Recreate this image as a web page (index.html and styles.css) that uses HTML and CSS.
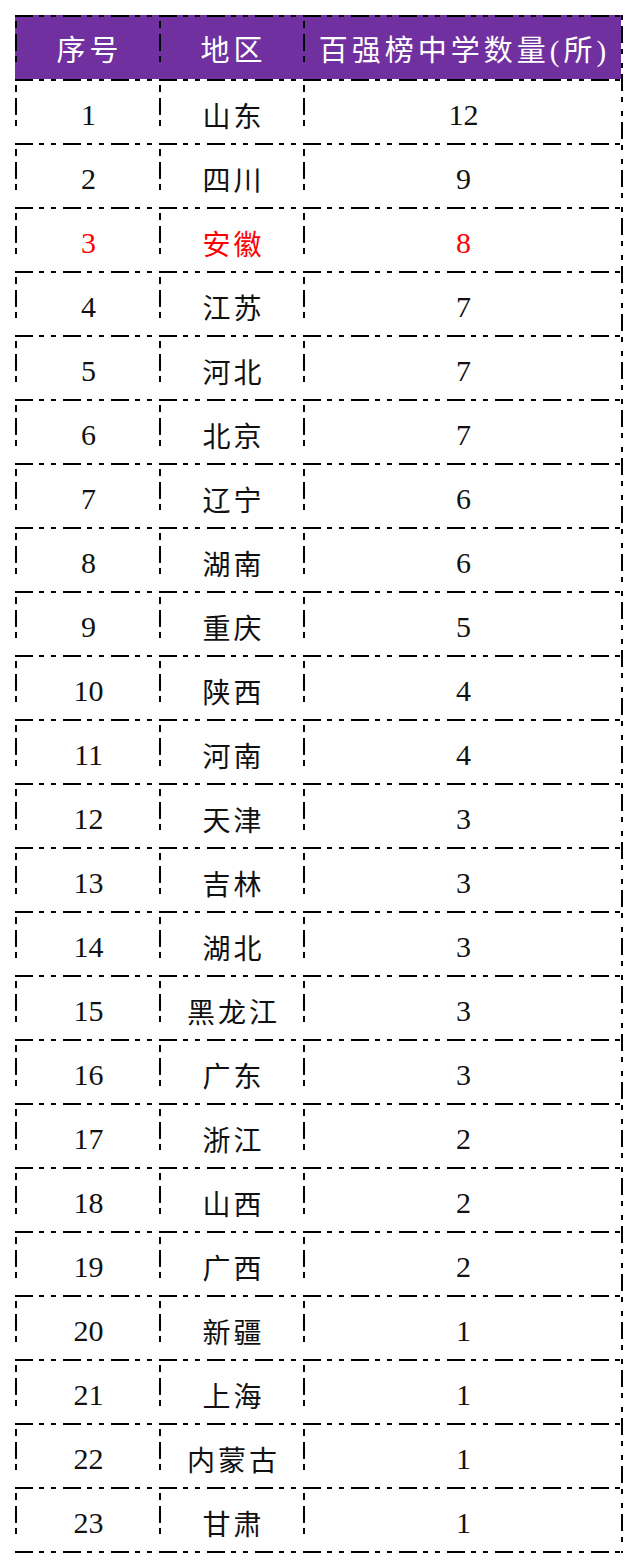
FILE: index.html
```html
<!DOCTYPE html>
<html lang="zh-CN">
<head>
<meta charset="utf-8">
<title>百强榜中学数量</title>
<link rel="stylesheet" href="styles.css">
</head>
<body>
<div class="table">
  <div class="cell head">序号</div><div class="cell head">地区</div><div class="cell head">百强榜中学数量(所)</div>
  <div class="cell">1</div><div class="cell name">山东</div><div class="cell">12</div>
  <div class="cell">2</div><div class="cell name">四川</div><div class="cell">9</div>
  <div class="cell hl">3</div><div class="cell name hl">安徽</div><div class="cell hl">8</div>
  <div class="cell">4</div><div class="cell name">江苏</div><div class="cell">7</div>
  <div class="cell">5</div><div class="cell name">河北</div><div class="cell">7</div>
  <div class="cell">6</div><div class="cell name">北京</div><div class="cell">7</div>
  <div class="cell">7</div><div class="cell name">辽宁</div><div class="cell">6</div>
  <div class="cell">8</div><div class="cell name">湖南</div><div class="cell">6</div>
  <div class="cell">9</div><div class="cell name">重庆</div><div class="cell">5</div>
  <div class="cell">10</div><div class="cell name">陕西</div><div class="cell">4</div>
  <div class="cell">11</div><div class="cell name">河南</div><div class="cell">4</div>
  <div class="cell">12</div><div class="cell name">天津</div><div class="cell">3</div>
  <div class="cell">13</div><div class="cell name">吉林</div><div class="cell">3</div>
  <div class="cell">14</div><div class="cell name">湖北</div><div class="cell">3</div>
  <div class="cell">15</div><div class="cell name">黑龙江</div><div class="cell">3</div>
  <div class="cell">16</div><div class="cell name">广东</div><div class="cell">3</div>
  <div class="cell">17</div><div class="cell name">浙江</div><div class="cell">2</div>
  <div class="cell">18</div><div class="cell name">山西</div><div class="cell">2</div>
  <div class="cell">19</div><div class="cell name">广西</div><div class="cell">2</div>
  <div class="cell">20</div><div class="cell name">新疆</div><div class="cell">1</div>
  <div class="cell">21</div><div class="cell name">上海</div><div class="cell">1</div>
  <div class="cell">22</div><div class="cell name">内蒙古</div><div class="cell">1</div>
  <div class="cell">23</div><div class="cell name">甘肃</div><div class="cell">1</div>
</div>
</body>
</html>
```
FILE: styles.css
```css
html, body {
  margin: 0;
  padding: 0;
  background: #ffffff;
}
body {
  padding: 15px 0 0 15px;
  font-family: "Liberation Serif", "Noto Sans CJK SC", serif;
  color: #111111;
}
.table {
  display: grid;
  grid-template-columns: 144px 144px 318px;
  grid-auto-rows: 64px;
  width: 606px;
  padding: 0 2px 2px 0;
  background-image:
    repeating-linear-gradient(to bottom, #000 0 5px, transparent 5px 11px, #000 11px 28px, transparent 28px 34px, #000 34px 39px, transparent 39px 48px),
    repeating-linear-gradient(to right, #000 0 18px, transparent 18px 24px, #000 24px 29px, transparent 29px 36px, #000 36px 41px, transparent 41px 48px);
  background-size: 2px 100%, 100% 2px;
  background-position: right top, left bottom;
  background-repeat: no-repeat;
}
.cell {
  display: flex;
  align-items: center;
  justify-content: center;
  font-size: 30px;
  letter-spacing: 0;
  padding: 7px 0 0 3px;
  background-image:
    repeating-linear-gradient(to right, #000 0 18px, transparent 18px 24px, #000 24px 29px, transparent 29px 36px, #000 36px 41px, transparent 41px 48px),
    repeating-linear-gradient(to bottom, #000 0 2px, transparent 2px 6px, #000 6px 13px, transparent 13px 19px, #000 19px 36px, transparent 36px 41px, #000 41px 47px, transparent 47px 64px);
  background-size: 100% 2px, 2px 100%;
  background-position: left top, left top;
  background-repeat: no-repeat;
}
.name {
  font-size: 28px;
  letter-spacing: 3px;
  padding-left: 5px;
}
.head {
  background-color: #7030a0;
  color: #ffffff;
  font-size: 29px;
  letter-spacing: 4px;
  padding: 2px 0 0 5px;
}
.hl {
  color: #ff0000;
}
```
